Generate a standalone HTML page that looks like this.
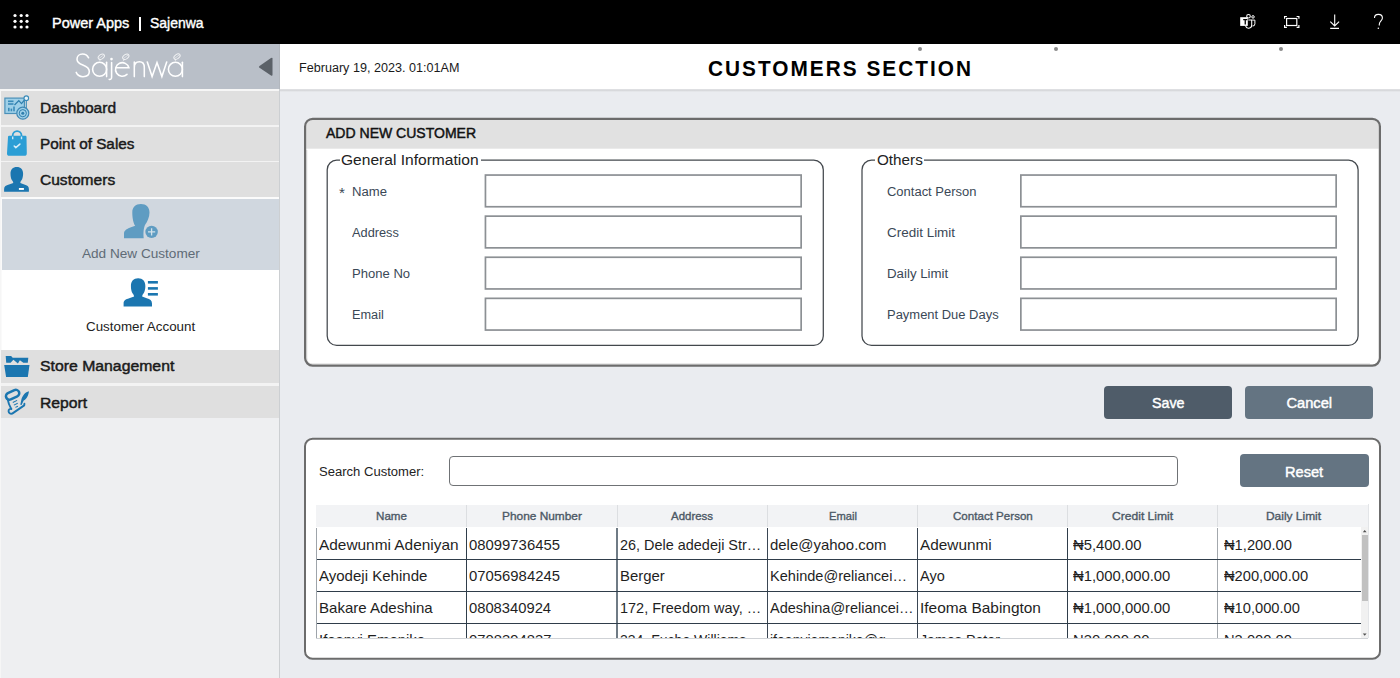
<!DOCTYPE html>
<html><head><meta charset="utf-8">
<style>
html,body{margin:0;padding:0;width:1400px;height:678px;overflow:hidden;background:#eaecf0;}
body{position:relative;font-family:"Liberation Sans",sans-serif;}
.t{position:absolute;white-space:nowrap;transform-origin:0 0;}
.r{position:absolute;box-sizing:content-box;}
</style></head><body>
<div class="r" style="left:0px;top:0px;width:1400px;height:44px;background:#000;"></div>
<svg class="r" style="left:0;top:0" width="44" height="44"><circle cx="15.0" cy="15.5" r="1.6" fill="#fff"/><circle cx="21.2" cy="15.5" r="1.6" fill="#fff"/><circle cx="27.0" cy="15.5" r="1.6" fill="#fff"/><circle cx="15.0" cy="21.3" r="1.6" fill="#fff"/><circle cx="21.2" cy="21.3" r="1.6" fill="#fff"/><circle cx="27.0" cy="21.3" r="1.6" fill="#fff"/><circle cx="15.0" cy="27.0" r="1.6" fill="#fff"/><circle cx="21.2" cy="27.0" r="1.6" fill="#fff"/><circle cx="27.0" cy="27.0" r="1.6" fill="#fff"/></svg>
<div class="t" style="left:51.60px;top:15.72px;font-size:14.39px;line-height:14.39px;color:#fff;-webkit-text-stroke:0.4px #fff;transform:scaleX(1.0079);">Power Apps</div>
<div class="r" style="left:139px;top:17px;width:1.8000000000000114px;height:14px;background:#fff;"></div>
<div class="t" style="left:149.90px;top:15.72px;font-size:14.39px;line-height:14.39px;color:#fff;-webkit-text-stroke:0.4px #fff;transform:scaleX(0.9710);">Sajenwa</div>

<svg class="r" style="left:0;top:0" width="1400"  height="44" fill="none" stroke="#fff">
 <!-- teams -->
 <rect x="1240.2" y="17.2" width="7.6" height="8.7" fill="#fff" stroke="none"/>
 <path d="M1243.2 19.7 H1247.3 M1245.25 19.7 V24.6" stroke="#000" stroke-width="1.3"/>
 <circle cx="1248.5" cy="16.3" r="1.8" stroke-width="1.05"/>
 <circle cx="1253" cy="16.9" r="1.25" stroke-width="1"/>
 <path d="M1248.3 20 H1251.7 V25.3 A3.1 3.1 0 0 1 1245.6 25.9" stroke-width="1.05"/>
 <path d="M1252.2 20.1 H1254.9 V23.8 A2.2 2.2 0 0 1 1252.4 26" stroke-width="1"/>
 <!-- fit -->
 <rect x="1286.6" y="18.5" width="10.2" height="7" stroke-width="1.2"/>
 <path d="M1284.6 18.8 v-2.3 h2.3 M1296.6 16.5 h2.3 v2.3 M1298.9 25.1 v2.3 h-2.3 M1286.9 27.4 h-2.3 v-2.3" stroke-width="1.2"/>
 <!-- download -->
 <path d="M1334.7 14.4 v11.6 M1330.3 21.6 l4.4 4.4 l4.4 -4.4 M1330.2 28.4 h8.8" stroke-width="1.1"/>
 <!-- help -->
 <path d="M1374.5 18 c0 -2.3 1.6 -3.6 3.9 -3.6 c2.3 0 4 1.4 4 3.6 c0 2.6 -3.1 3.3 -3.1 6.3 v1.3" stroke-width="1.1"/>
 <circle cx="1378.3" cy="28.2" r="0.75" fill="#fff" stroke="none"/>
</svg>
<div class="r" style="left:0px;top:44px;width:280px;height:634px;background:#eeeff1;"></div>
<div class="r" style="left:0px;top:44px;width:280px;height:45px;background:#b9bfc8;"></div>
<div class="r" style="left:0px;top:89.3px;width:280px;height:1.7000000000000028px;background:#f6f6f6;"></div>
<div class="r" style="left:0px;top:90.5px;width:279px;height:34.0px;background:#dfdfdf;"></div>
<div class="r" style="left:0px;top:126.5px;width:279px;height:34.0px;background:#dfdfdf;"></div>
<div class="r" style="left:0px;top:162px;width:279px;height:34.599999999999994px;background:#dfdfdf;"></div>
<div class="r" style="left:0px;top:350px;width:279px;height:33px;background:#dfdfdf;"></div>
<div class="r" style="left:0px;top:385.7px;width:279px;height:32.80000000000001px;background:#dfdfdf;"></div>
<div class="r" style="left:0px;top:124.5px;width:279px;height:2.0px;background:#f3f3f3;"></div>
<div class="r" style="left:0px;top:160.5px;width:279px;height:1.5px;background:#f3f3f3;"></div>
<div class="r" style="left:0px;top:196.6px;width:279px;height:2.4000000000000057px;background:#fbfbfb;"></div>
<div class="r" style="left:0px;top:383px;width:279px;height:2.6999999999999886px;background:#f3f3f3;"></div>
<div class="r" style="left:2px;top:199px;width:277px;height:70.60000000000002px;background:#d0d7df;"></div>
<div class="r" style="left:0px;top:199px;width:2px;height:151px;background:#fafafa;"></div>
<div class="r" style="left:2px;top:269.6px;width:277px;height:80.39999999999998px;background:#fff;"></div>
<div class="r" style="left:279px;top:89px;width:1.3999999999999773px;height:589px;background:#cccfd2;"></div>
<div class="r" style="left:279px;top:44px;width:1.1999999999999886px;height:45px;background:#b2b7be;"></div>
<div class="r" style="left:0px;top:89px;width:1.2px;height:589px;background:#f6f6f6;"></div>
<div class="t" style="left:40.40px;top:100.67px;font-size:14.68px;line-height:14.68px;color:#1a1a1a;-webkit-text-stroke:0.45px #1a1a1a;transform:scaleX(1.0596);">Dashboard</div>
<div class="t" style="left:40.00px;top:136.77px;font-size:14.68px;line-height:14.68px;color:#1a1a1a;-webkit-text-stroke:0.45px #1a1a1a;transform:scaleX(1.0432);">Point of Sales</div>
<div class="t" style="left:40.00px;top:172.87px;font-size:14.68px;line-height:14.68px;color:#1a1a1a;-webkit-text-stroke:0.45px #1a1a1a;transform:scaleX(1.0596);">Customers</div>
<div class="t" style="left:39.80px;top:359.27px;font-size:14.68px;line-height:14.68px;color:#1a1a1a;-webkit-text-stroke:0.45px #1a1a1a;transform:scaleX(1.0764);">Store Management</div>
<div class="t" style="left:39.80px;top:395.67px;font-size:14.68px;line-height:14.68px;color:#1a1a1a;-webkit-text-stroke:0.45px #1a1a1a;transform:scaleX(1.0712);">Report</div>
<div class="t" style="left:81.90px;top:247.40px;font-size:13.23px;line-height:13.23px;color:#5f6b76;transform:scaleX(1.0281);">Add New Customer</div>
<div class="t" style="left:86.20px;top:319.60px;font-size:13.23px;line-height:13.23px;color:#222;transform:scaleX(1.0104);">Customer Account</div>
<svg class="r" style="left:0;top:0" width="280" height="90"><path d="M272.5 58.5 L272.5 74.8 Q272.5 76.3 271 75.5 L259.5 67.8 Q258.3 66.9 259.5 66 L271 58 Q272.5 57.1 272.5 58.5Z" fill="#5b6168"/></svg>
<svg class="r" style="left:0;top:0" width="280" height="678">
 <!-- logo -->
 <g fill="none" stroke="#fff" stroke-width="1.55" stroke-linecap="round">
  <path d="M88.6 57.8 C87.2 55.2 85 54 82.6 54 C79.2 54 77 56.4 77 59.2 C77 62.4 79.6 63.8 82.8 65 C86.6 66.4 89.3 68 89.3 71.6 C89.3 74.9 86.5 76.7 83 76.7 C79.9 76.7 77.3 75 76.2 72.4"/>
  <circle cx="99.6" cy="69.3" r="7"/>
  <path d="M106.6 62.2 V76.6"/>
  <path d="M111.6 62.5 V77.2 Q111.6 79.6 109.2 79.4"/>
  <path d="M115.7 67.8 H128.9 A6.8 6.8 0 1 0 127 74.4"/>
  <path d="M134.3 76.6 V62 M134.3 67.5 C134.3 63.8 136.6 61.8 139.4 61.8 C142.2 61.8 144.3 63.8 144.3 67.5 V76.6"/>
  <path d="M147.3 62 L152.1 76.6 L157 62.5 L161.9 76.6 L166.7 62"/>
  <circle cx="175.4" cy="69.3" r="7"/>
  <path d="M182.4 62.2 V76.6"/>
 </g>
 <circle cx="111.5" cy="59.1" r="1.3" fill="#fff"/>
 <g fill="none" stroke="#fff" stroke-width="0.95" opacity="0.8">
  <ellipse cx="101.3" cy="56.75" rx="3.5" ry="2.2" transform="rotate(-35 101.3 56.75)"/>
  <path d="M98.9 58.6 L103.7 54.9 M100.2 59.3 L99.8 61.2" stroke-width="0.7"/>
  <ellipse cx="125.8" cy="56.75" rx="3.5" ry="2.2" transform="rotate(-35 125.8 56.75)"/>
  <path d="M123.4 58.6 L128.2 54.9 M124.1 59.3 L123.4 61.2" stroke-width="0.7"/>
  <ellipse cx="177" cy="56.6" rx="3.5" ry="2.2" transform="rotate(-35 177 56.6)"/>
  <path d="M174.6 58.45 L179.4 54.75 M175.6 59.2 L175.3 61.2" stroke-width="0.7"/>
 </g>
 <!-- dashboard icon -->
 <g>
  <rect x="4.9" y="98.1" width="19.5" height="15.4" fill="#9fd0e8" stroke="#4a90b8" stroke-width="1.2"/>
  <rect x="8" y="100.5" width="5.5" height="1.6" fill="#3b8bb8"/>
  <rect x="8" y="103.2" width="5.5" height="1.6" fill="#3b8bb8"/>
  <rect x="8" y="107.8" width="1.6" height="3.5" fill="#3b8bb8"/>
  <rect x="10.6" y="108.6" width="1.6" height="2.7" fill="#3b8bb8"/>
  <rect x="13.2" y="106.5" width="1.6" height="4.8" fill="#3b8bb8"/>
  <path d="M14.5 105 L18.8 100.6 L21.5 103.6 L24.8 99.6" fill="none" stroke="#2f7fae" stroke-width="1.3"/>
  <circle cx="26.3" cy="98.2" r="2.3" fill="#e8f4fa" stroke="#3b8bb8" stroke-width="1.1"/>
  <path d="M26.3 100.5 V108" stroke="#3b8bb8" stroke-width="1.1"/>
  <circle cx="22.8" cy="113.2" r="6" fill="#9fd0e8" stroke="#3f88b4" stroke-width="1.2"/>
  <circle cx="22.8" cy="113.2" r="3.6" fill="none" stroke="#2f7fae" stroke-width="1"/>
  <circle cx="22.8" cy="113.2" r="1.5" fill="#2f7fae"/>
 </g>
 <!-- bag icon -->
 <path d="M12.7 139.5 V135.5 A4.4 4.4 0 0 1 21.5 135.5 V139.5" fill="none" stroke="#2b9ed5" stroke-width="1.8"/>
 <path fill="#2b9ed5" d="M9.2 135.8 H25.4 Q26.5 135.8 26.5 137 L26.8 153.2 Q26.8 155.8 24.4 155.8 H9.4 Q6.9 155.8 7 153.2 L8 137 Q8 135.8 9.2 135.8 Z"/>
 <path d="M12.7 136.6 V139.3 M21.5 136.6 V139.3" stroke="#cfe9f6" stroke-width="1.4"/>
 <path d="M14.2 146 L15.8 147.6 L19.9 144.1" fill="none" stroke="#d7eef9" stroke-width="1.5" stroke-linecap="round" stroke-linejoin="round"/>
 <!-- customers icon -->
 <path fill="#1b76b0" d="M4.1 191.8 V189 C4.1 186.4 6 185.4 9 184.5 L13.3 183 C13 181.6 12.6 181 12 180.3 C10.9 178.6 10.5 176.4 10.5 173.8 C10.5 169.5 12.8 167 16.8 167 C20.8 167 23.1 169.5 23.1 173.8 C23.1 176.4 22.6 178.6 21.5 180.3 C20.9 181 20.5 181.6 20.3 183 L24.3 184.5 C27.2 185.4 28.9 186.4 28.9 189 V191.8 Z"/>
 <rect x="18.9" y="188" width="5" height="1.9" fill="#fff"/>
 <!-- add new customer icon -->
 <path fill="#5f9cc2" d="M124 238.2 V233.5 C124 230.2 127.5 228.6 131 227.3 L135.2 225.8 C133.3 223 132.3 217.5 132.3 212.5 C132.3 207.2 135.6 204 140.9 204 C146.3 204 149.5 207.3 149.5 212.4 C149.5 217 147.2 221.6 145.3 224.6 C143.8 227.2 143.1 232.4 143.7 238.2 Z"/>
 <circle cx="151.6" cy="231.9" r="7.3" fill="#d0d7df"/>
 <circle cx="151.6" cy="231.9" r="6.2" fill="#5f9cc2"/>
 <path d="M151.6 228.3 V235.5 M148 231.9 H155.2" stroke="#d3e2ea" stroke-width="1.3"/>
 <!-- customer account icon -->
 <path fill="#1b76b0" transform="translate(123.6 278.2) scale(1.145) translate(-4.1 -167)" d="M4.1 191.8 V189 C4.1 186.4 6 185.4 9 184.5 L13.3 183 C13 181.6 12.6 181 12 180.3 C10.9 178.6 10.5 176.4 10.5 173.8 C10.5 169.5 12.8 167 16.8 167 C20.8 167 23.1 169.5 23.1 173.8 C23.1 176.4 22.6 178.6 21.5 180.3 C20.9 181 20.5 181.6 20.3 183 L24.3 184.5 C27.2 185.4 28.9 186.4 28.9 189 V191.8 Z"/>
 <rect x="147.9" y="281" width="10" height="2.6" fill="#1b76b0"/>
 <rect x="147.9" y="287.1" width="10" height="2.6" fill="#1b76b0"/>
 <rect x="147.9" y="293" width="10" height="2.6" fill="#1b76b0"/>
 <!-- store mgmt folder -->
 <path fill="#1b76b0" d="M5.7 356.1 H11.1 L12.7 357.8 H28.3 L27.8 362.7 H23.3 L19.9 360.3 L17.9 363.6 L13.4 359.8 L10.6 362.7 H6.2 Z"/>
 <path fill="#1b76b0" d="M4.2 365.1 H29.5 L27.8 376.9 H6.1 Z"/>
 <!-- report icon -->
 <g fill="none" stroke="#1b76b0" stroke-width="1.9" stroke-linecap="round" stroke-linejoin="round">
  <rect x="5.6" y="391.4" width="14" height="6.8" rx="3.4" stroke-width="2.5" transform="rotate(-25 12.6 394.8)"/>
  <path d="M7.4 398.4 Q8.6 404.6 11.3 408.9"/>
  <path d="M11.3 408.9 Q8.5 408.6 8.6 411.3 Q8.9 414.1 12.2 413.6 L24.2 405.4 L24.4 403.8"/>
 </g>
 <path d="M12.8 402.5 L17.1 400.4 M13.9 405.1 L17.7 403.3 M15.4 407.4 L17.9 406.2" stroke="#1b76b0" stroke-width="1.05" fill="none"/>
 <path fill="#1b76b0" d="M28.9 391.2 C25.4 392 22.6 395.3 21.5 399 L20.3 404.7 L21.6 404.9 L23.7 400.6 C26.7 399 28.7 395 28.9 391.2 Z"/>
</svg>
<div class="r" style="left:280.4px;top:89px;width:1119.6px;height:589px;background:#eaecf0;"></div>
<div class="r" style="left:280px;top:44px;width:1120px;height:45px;background:#fff;"></div>
<div class="r" style="left:280px;top:89px;width:1120px;height:2.5999999999999943px;background:linear-gradient(#e3e4e6,#d6d7da 45%,#eaecf0);"></div>
<div class="t" style="left:299.00px;top:61.16px;font-size:13.52px;line-height:13.52px;color:#1a1a1a;transform:scaleX(0.9321);">February 19, 2023. 01:01AM</div>
<div class="t" style="left:708.00px;top:56.81px;font-size:22.67px;line-height:22.67px;color:#000;font-weight:bold;letter-spacing:2.2px;transform:scaleX(0.9178);">CUSTOMERS SECTION</div>
<div class="r" style="left:918.4px;top:46.8px;width:4px;height:4px;border-radius:2px;background:#8a8a8a"></div>
<div class="r" style="left:1054px;top:46.8px;width:4px;height:4px;border-radius:2px;background:#8a8a8a"></div>
<div class="r" style="left:1278.5px;top:46.8px;width:4px;height:4px;border-radius:2px;background:#8a8a8a"></div>
<svg class="r" style="left:0;top:0" width="1400" height="678">
 <defs><clipPath id="p1c"><rect x="306.2" y="119.9" width="1072.6" height="244.6" rx="6.5"/></clipPath></defs>
 <rect x="305.1" y="118.8" width="1074.8" height="246.8" rx="7.6" fill="#fff"/>
 <rect x="300" y="115" width="1090" height="33.7" fill="#e1e1e1" clip-path="url(#p1c)"/>
 <path d="M306.8 150 V358 Q306.8 363.9 312.5 363.9 H1370" fill="none" stroke="#d4d4d4" stroke-width="1" opacity="0.8"/>
 <rect x="305.1" y="118.8" width="1074.8" height="246.8" rx="7.6" fill="none" stroke="#6c6c6c" stroke-width="2.2"/>
 <rect x="305" y="438.7" width="1075" height="220.1" rx="7.6" fill="#fff" stroke="#6c6c6c" stroke-width="2"/>
</svg>
<div class="t" style="left:326.00px;top:126.14px;font-size:14.24px;line-height:14.24px;color:#111;-webkit-text-stroke:0.45px #111;transform:scaleX(0.9851);">ADD NEW CUSTOMER</div>
<svg class="r" style="left:0;top:0" width="1400" height="678"><g fill="none" stroke="#43484d" stroke-width="1.25"><rect x="327.2" y="160.2" width="496.1" height="185.2" rx="9.5"/><rect x="862.0" y="160.2" width="496.1" height="185.2" rx="9.5"/></g></svg>
<div class="r" style="left:339.5px;top:155px;width:141.5px;height:10px;background:#fff;"></div>
<div class="r" style="left:874.8px;top:155px;width:49.700000000000045px;height:10px;background:#fff;"></div>
<div class="t" style="left:341.30px;top:153.32px;font-size:14.39px;line-height:14.39px;color:#222;transform:scaleX(1.0827);">General Information</div>
<div class="t" style="left:876.60px;top:153.32px;font-size:14.39px;line-height:14.39px;color:#222;transform:scaleX(1.0606);">Others</div>
<div class="t" style="left:351.60px;top:184.63px;font-size:13.66px;line-height:13.66px;color:#3a4856;transform:scaleX(0.9603);">Name</div>
<div class="t" style="left:351.60px;top:225.73px;font-size:13.66px;line-height:13.66px;color:#3a4856;transform:scaleX(0.9357);">Address</div>
<div class="t" style="left:351.60px;top:266.83px;font-size:13.66px;line-height:13.66px;color:#3a4856;transform:scaleX(0.9561);">Phone No</div>
<div class="t" style="left:351.60px;top:307.93px;font-size:13.66px;line-height:13.66px;color:#3a4856;transform:scaleX(0.9308);">Email</div>
<div class="t" style="left:338.90px;top:185.48px;font-size:15.26px;line-height:15.26px;color:#3a4856;">*</div>
<div class="t" style="left:886.70px;top:184.63px;font-size:13.66px;line-height:13.66px;color:#3a4856;transform:scaleX(0.9504);">Contact Person</div>
<div class="t" style="left:886.70px;top:225.73px;font-size:13.66px;line-height:13.66px;color:#3a4856;transform:scaleX(0.9857);">Credit Limit</div>
<div class="t" style="left:886.70px;top:266.83px;font-size:13.66px;line-height:13.66px;color:#3a4856;transform:scaleX(0.9728);">Daily Limit</div>
<div class="t" style="left:886.70px;top:307.93px;font-size:13.66px;line-height:13.66px;color:#3a4856;transform:scaleX(0.9490);">Payment Due Days</div>
<svg class="r" style="left:0;top:0" width="1400" height="678"><g fill="#fff" stroke="#8c9094" stroke-width="1.7"><rect x="485.45" y="175.05" width="315.7" height="31.7"/><rect x="1020.85" y="175.05" width="315.3" height="31.7"/><rect x="485.45" y="216.15" width="315.7" height="31.7"/><rect x="1020.85" y="216.15" width="315.3" height="31.7"/><rect x="485.45" y="257.25" width="315.7" height="31.7"/><rect x="1020.85" y="257.25" width="315.3" height="31.7"/><rect x="485.45" y="298.35" width="315.7" height="31.7"/><rect x="1020.85" y="298.35" width="315.3" height="31.7"/></g></svg>
<div class="r" style="left:1103.5px;top:386px;width:128.5px;height:32.6px;border-radius:4px;background:#4f5c69"></div>
<div class="r" style="left:1245px;top:386px;width:128px;height:32.6px;border-radius:4px;background:#647482"></div>
<div class="t" style="left:1151.50px;top:395.77px;font-size:14.68px;line-height:14.68px;color:#fff;-webkit-text-stroke:0.45px #fff;transform:scaleX(0.9713);">Save</div>
<div class="t" style="left:1286.40px;top:395.77px;font-size:14.68px;line-height:14.68px;color:#fff;-webkit-text-stroke:0.45px #fff;transform:scaleX(1.0000);">Cancel</div>
<div class="t" style="left:318.80px;top:464.83px;font-size:13.66px;line-height:13.66px;color:#222;transform:scaleX(0.9554);">Search Customer:</div>
<div class="r" style="left:448.6px;top:456.3px;width:727px;height:27.3px;border:1px solid #6f7275;border-radius:4px;background:#fff"></div>
<div class="r" style="left:1240px;top:454px;width:129px;height:32.6px;border-radius:4px;background:#647482"></div>
<div class="t" style="left:1285.30px;top:464.08px;font-size:15.26px;line-height:15.26px;color:#fff;-webkit-text-stroke:0.45px #fff;transform:scaleX(0.9556);">Reset</div>
<div class="r" style="left:316.3px;top:504.5px;width:1052.1000000000001px;height:23.0px;background:#f2f3f5;"></div>
<div class="r" style="left:466px;top:504.5px;width:1px;height:23.0px;background:#dcdee1;"></div>
<div class="r" style="left:617px;top:504.5px;width:1px;height:23.0px;background:#dcdee1;"></div>
<div class="r" style="left:767px;top:504.5px;width:1px;height:23.0px;background:#dcdee1;"></div>
<div class="r" style="left:917px;top:504.5px;width:1px;height:23.0px;background:#dcdee1;"></div>
<div class="r" style="left:1067px;top:504.5px;width:1px;height:23.0px;background:#dcdee1;"></div>
<div class="r" style="left:1217px;top:504.5px;width:1px;height:23.0px;background:#dcdee1;"></div>
<div class="t" style="left:376.20px;top:510.98px;font-size:11.48px;line-height:11.48px;color:#4d5966;-webkit-text-stroke:0.35px #4d5966;transform:scaleX(1.0121);">Name</div>
<div class="t" style="left:502.00px;top:510.98px;font-size:11.48px;line-height:11.48px;color:#4d5966;-webkit-text-stroke:0.35px #4d5966;transform:scaleX(1.0358);">Phone Number</div>
<div class="t" style="left:670.90px;top:510.98px;font-size:11.48px;line-height:11.48px;color:#4d5966;-webkit-text-stroke:0.35px #4d5966;transform:scaleX(0.9994);">Address</div>
<div class="t" style="left:828.60px;top:510.98px;font-size:11.48px;line-height:11.48px;color:#4d5966;-webkit-text-stroke:0.35px #4d5966;transform:scaleX(0.9751);">Email</div>
<div class="t" style="left:952.70px;top:510.98px;font-size:11.48px;line-height:11.48px;color:#4d5966;-webkit-text-stroke:0.35px #4d5966;transform:scaleX(1.0095);">Contact Person</div>
<div class="t" style="left:1112.10px;top:510.98px;font-size:11.48px;line-height:11.48px;color:#4d5966;-webkit-text-stroke:0.35px #4d5966;transform:scaleX(1.0540);">Credit Limit</div>
<div class="t" style="left:1265.60px;top:510.98px;font-size:11.48px;line-height:11.48px;color:#4d5966;-webkit-text-stroke:0.35px #4d5966;transform:scaleX(1.0405);">Daily Limit</div>
<div class="r" style="left:316.3px;top:527.3px;width:1052.1px;height:111.1px;overflow:hidden;background:#fff">
<div class="t" style="left:2.60px;top:9.60px;font-size:15.12px;line-height:15.12px;color:#1f1f1f;transform:scaleX(1.0191);">Adewunmi Adeniyan</div>
<div class="t" style="left:153.10px;top:9.60px;font-size:15.12px;line-height:15.12px;color:#1f1f1f;transform:scaleX(0.9840);">08099736455</div>
<div class="t" style="left:303.30px;top:9.60px;font-size:15.12px;line-height:15.12px;color:#1f1f1f;transform:scaleX(0.9554);">26, Dele adedeji Str…</div>
<div class="t" style="left:453.60px;top:9.60px;font-size:15.12px;line-height:15.12px;color:#1f1f1f;transform:scaleX(0.9892);">dele@yahoo.com</div>
<div class="t" style="left:603.70px;top:9.60px;font-size:15.12px;line-height:15.12px;color:#1f1f1f;transform:scaleX(1.0159);">Adewunmi</div>
<div class="t" style="left:756.50px;top:9.60px;font-size:15.12px;line-height:15.12px;color:#1f1f1f;transform:scaleX(0.9805);">₦5,400.00</div>
<div class="t" style="left:907.30px;top:9.60px;font-size:15.12px;line-height:15.12px;color:#1f1f1f;transform:scaleX(0.9733);">₦1,200.00</div>
<div class="t" style="left:2.60px;top:41.15px;font-size:15.12px;line-height:15.12px;color:#1f1f1f;transform:scaleX(0.9946);">Ayodeji Kehinde</div>
<div class="t" style="left:153.10px;top:41.15px;font-size:15.12px;line-height:15.12px;color:#1f1f1f;transform:scaleX(0.9840);">07056984245</div>
<div class="t" style="left:303.30px;top:41.15px;font-size:15.12px;line-height:15.12px;color:#1f1f1f;transform:scaleX(0.9852);">Berger</div>
<div class="t" style="left:453.60px;top:41.15px;font-size:15.12px;line-height:15.12px;color:#1f1f1f;transform:scaleX(0.9632);">Kehinde@reliancei…</div>
<div class="t" style="left:603.70px;top:41.15px;font-size:15.12px;line-height:15.12px;color:#1f1f1f;transform:scaleX(0.9583);">Ayo</div>
<div class="t" style="left:756.50px;top:41.15px;font-size:15.12px;line-height:15.12px;color:#1f1f1f;transform:scaleX(0.9810);">₦1,000,000.00</div>
<div class="t" style="left:907.30px;top:41.15px;font-size:15.12px;line-height:15.12px;color:#1f1f1f;transform:scaleX(0.9714);">₦200,000.00</div>
<div class="t" style="left:2.60px;top:72.70px;font-size:15.12px;line-height:15.12px;color:#1f1f1f;transform:scaleX(0.9948);">Bakare Adeshina</div>
<div class="t" style="left:153.10px;top:72.70px;font-size:15.12px;line-height:15.12px;color:#1f1f1f;transform:scaleX(0.9765);">0808340924</div>
<div class="t" style="left:303.30px;top:72.70px;font-size:15.12px;line-height:15.12px;color:#1f1f1f;transform:scaleX(0.9574);">172, Freedom way, …</div>
<div class="t" style="left:453.60px;top:72.70px;font-size:15.12px;line-height:15.12px;color:#1f1f1f;transform:scaleX(0.9586);">Adeshina@reliancei…</div>
<div class="t" style="left:603.70px;top:72.70px;font-size:15.12px;line-height:15.12px;color:#1f1f1f;transform:scaleX(1.0211);">Ifeoma Babington</div>
<div class="t" style="left:756.50px;top:72.70px;font-size:15.12px;line-height:15.12px;color:#1f1f1f;transform:scaleX(0.9810);">₦1,000,000.00</div>
<div class="t" style="left:907.30px;top:72.70px;font-size:15.12px;line-height:15.12px;color:#1f1f1f;transform:scaleX(0.9723);">₦10,000.00</div>
<div class="t" style="left:2.60px;top:104.25px;font-size:15.12px;line-height:15.12px;color:#1f1f1f;transform:scaleX(0.9865);">Ifeanyi Emenike</div>
<div class="t" style="left:153.10px;top:104.25px;font-size:15.12px;line-height:15.12px;color:#1f1f1f;transform:scaleX(0.9825);">0708394837</div>
<div class="t" style="left:303.30px;top:104.25px;font-size:15.12px;line-height:15.12px;color:#1f1f1f;transform:scaleX(0.9285);">334, Fuche Williams…</div>
<div class="t" style="left:453.60px;top:104.25px;font-size:15.12px;line-height:15.12px;color:#1f1f1f;transform:scaleX(0.9291);">ifeanyiemenike@g…</div>
<div class="t" style="left:603.70px;top:104.25px;font-size:15.12px;line-height:15.12px;color:#1f1f1f;transform:scaleX(0.9428);">James Peter</div>
<div class="t" style="left:756.50px;top:104.25px;font-size:15.12px;line-height:15.12px;color:#1f1f1f;transform:scaleX(0.9800);">₦30,000.00</div>
<div class="t" style="left:907.30px;top:104.25px;font-size:15.12px;line-height:15.12px;color:#1f1f1f;transform:scaleX(0.9733);">₦3,000.00</div>
</div>
<div class="r" style="left:466px;top:527.5px;width:1.1000000000000227px;height:110.89999999999998px;background:#2f3d4a;"></div>
<div class="r" style="left:616px;top:527.5px;width:2px;height:110.89999999999998px;background:#6f7b85;"></div>
<div class="r" style="left:767px;top:527.5px;width:1.1000000000000227px;height:110.89999999999998px;background:#3a4653;"></div>
<div class="r" style="left:917px;top:527.5px;width:1.1000000000000227px;height:110.89999999999998px;background:#3a4653;"></div>
<div class="r" style="left:1067px;top:527.5px;width:1.099999999999909px;height:110.89999999999998px;background:#2f3d4a;"></div>
<div class="r" style="left:1217px;top:527.5px;width:1.099999999999909px;height:110.89999999999998px;background:#a3a8ad;"></div>
<div class="r" style="left:316.3px;top:558.8px;width:1044.7px;height:1.1000000000000227px;background:#2f3d4a;"></div>
<div class="r" style="left:316.3px;top:590.9px;width:1044.7px;height:1.1000000000000227px;background:#2f3d4a;"></div>
<div class="r" style="left:316.3px;top:623.0px;width:1044.7px;height:1.1000000000000227px;background:#2f3d4a;"></div>
<div class="r" style="left:316px;top:527.5px;width:1px;height:110.89999999999998px;background:#9ea4aa;"></div>
<div class="r" style="left:316.3px;top:637.9px;width:1052.1000000000001px;height:1.0px;background:#cfd2d6;"></div>
<div class="r" style="left:1361px;top:527.3px;width:7.400000000000091px;height:111.10000000000002px;background:#f1f1f1;"></div>
<div class="r" style="left:1361.8px;top:535px;width:5.7999999999999545px;height:65.79999999999995px;background:#c1c1c1;"></div>
<svg class="r" style="left:0;top:0" width="1400" height="678"><path d="M1362.8 532.2 L1366.6 532.2 L1364.7 530.0 Z M1362.8 633.6 L1366.6 633.6 L1364.7 635.8 Z" fill="#505050"/></svg>
<div class="r" style="left:1368.4px;top:504.1px;width:0.7999999999999545px;height:134.29999999999995px;background:#e3e5e8;"></div>
</body></html>
